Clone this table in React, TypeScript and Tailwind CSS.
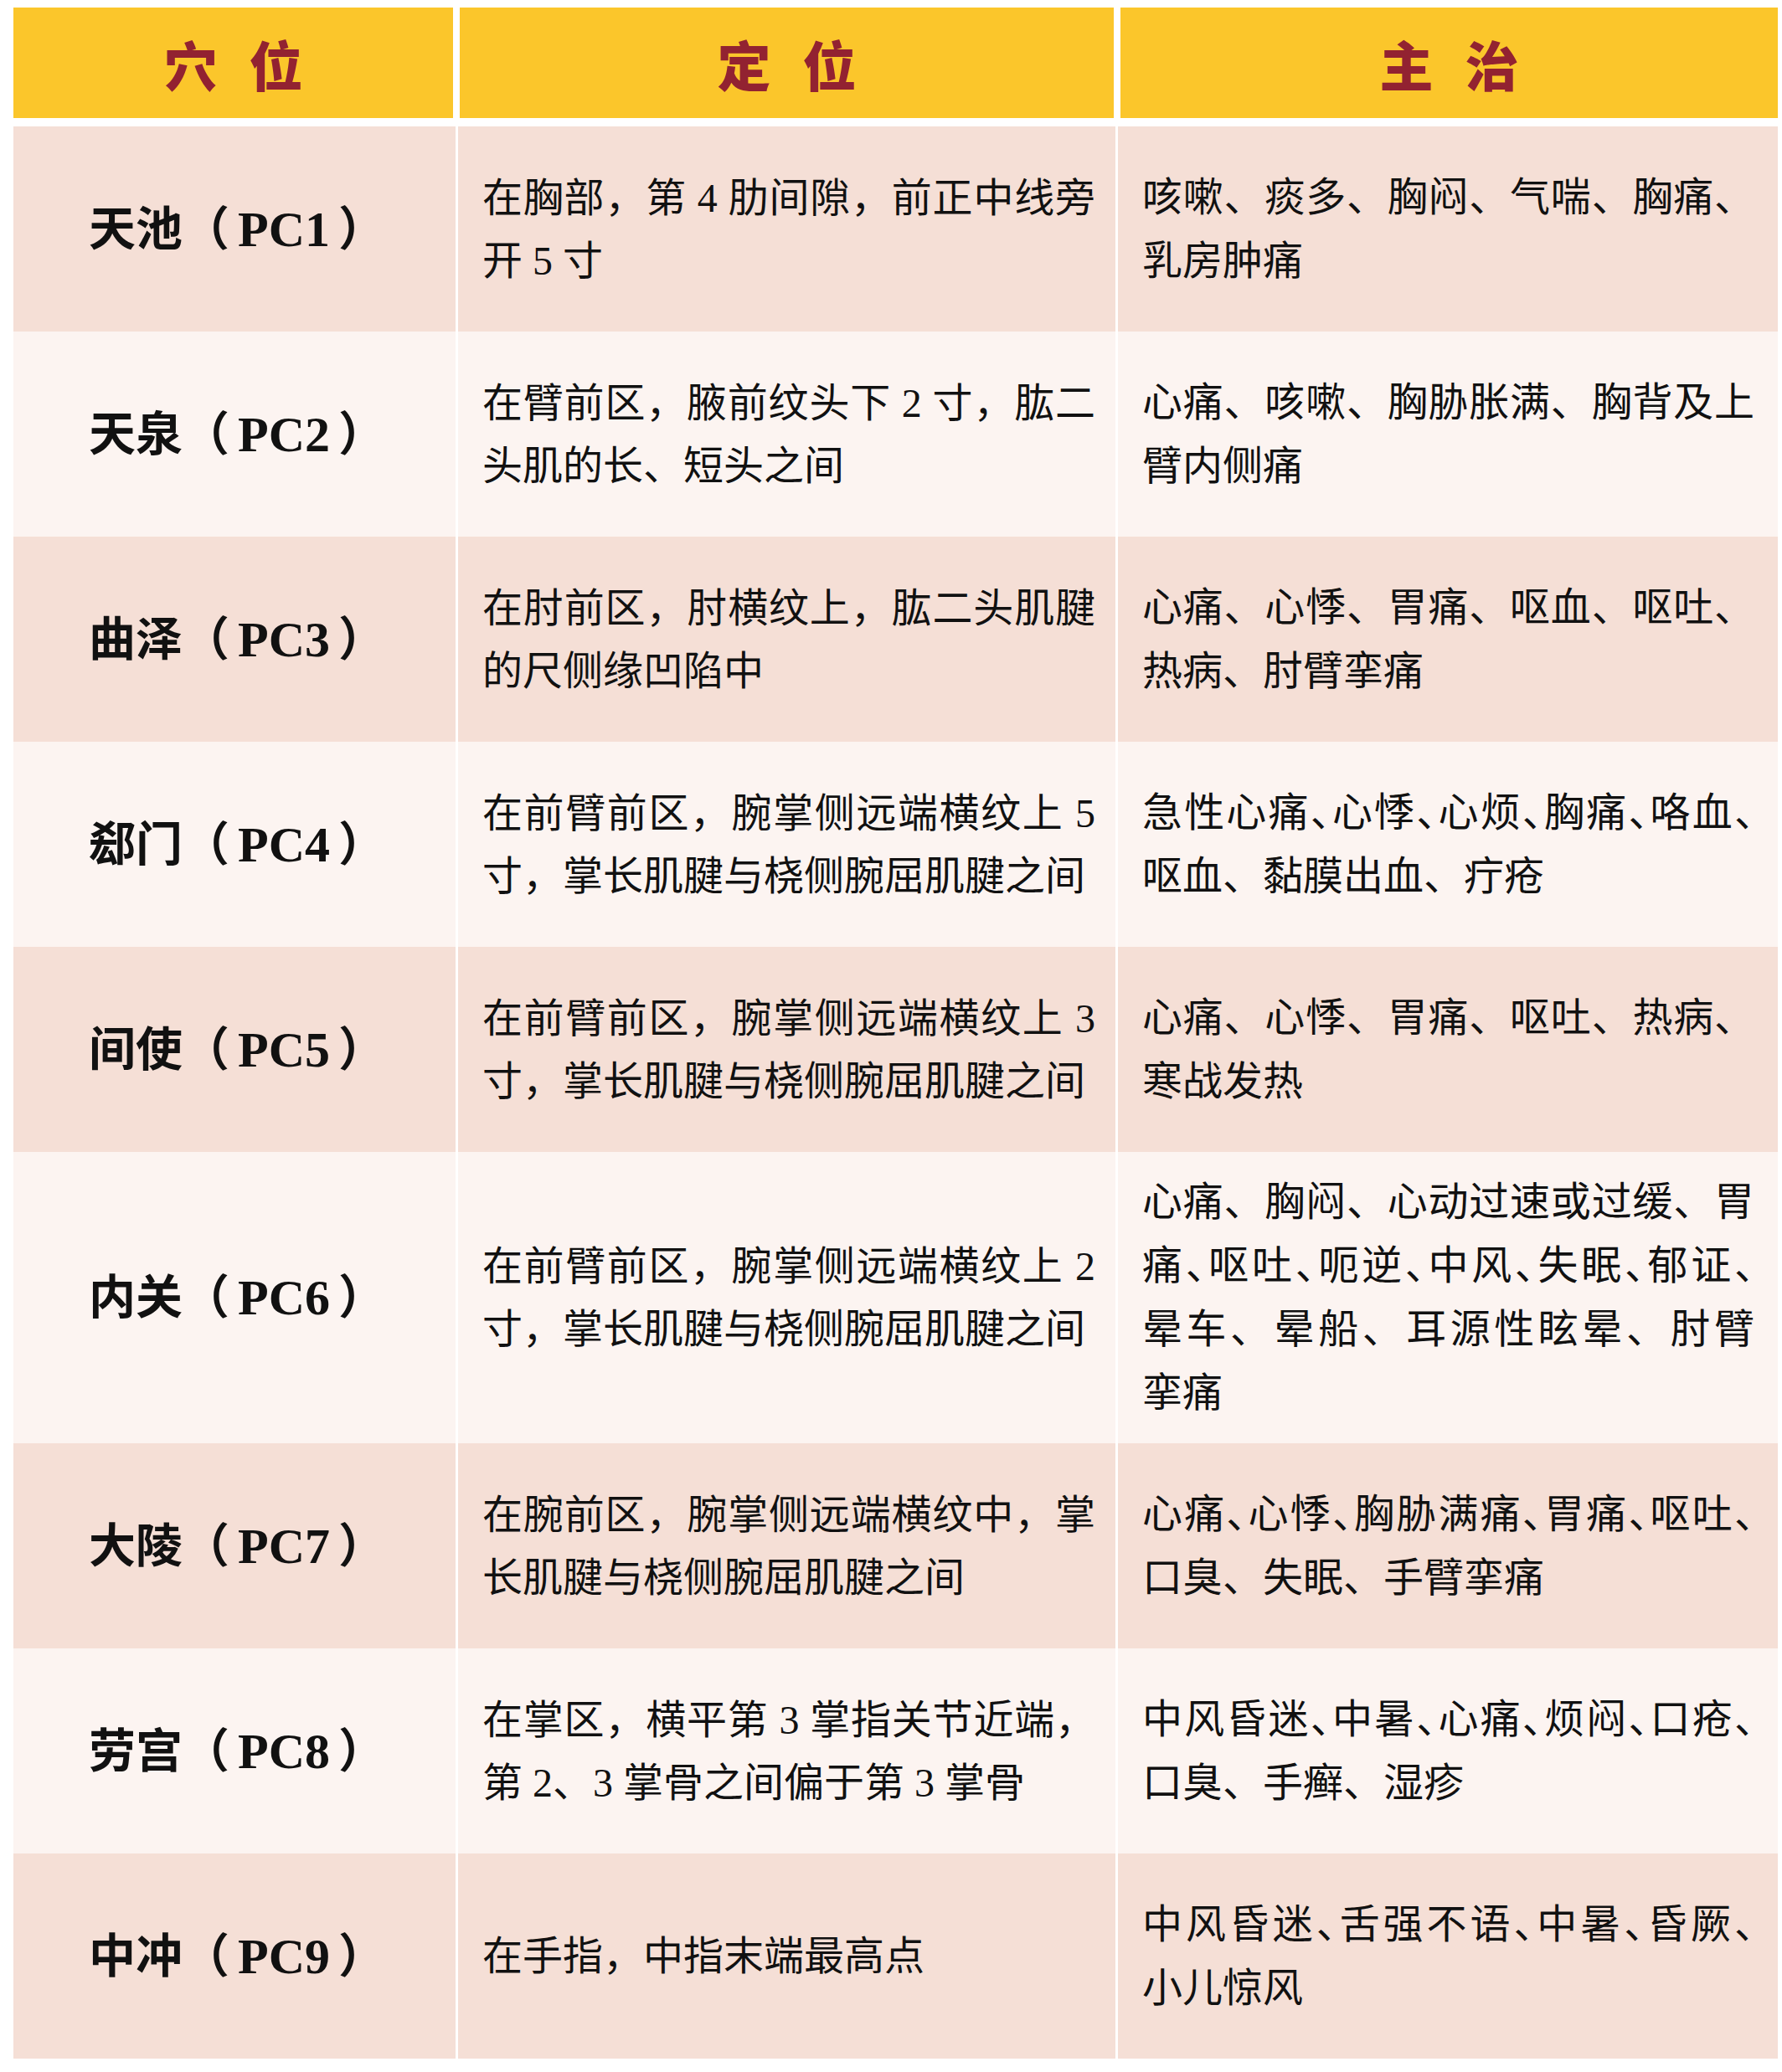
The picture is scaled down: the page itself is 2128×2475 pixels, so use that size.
type Row = {
  name: string;
  code: string;
  loc: string[];
  cure: string[];
};

const rows: Row[] = [
  {
    name: '天池',
    code: 'PC1',
    loc: ['在胸部，第 4 肋间隙，前正中线旁', '开 5 寸'],
    cure: ['咳嗽、痰多、胸闷、气喘、胸痛、', '乳房肿痛'],
  },
  {
    name: '天泉',
    code: 'PC2',
    loc: ['在臂前区，腋前纹头下 2 寸，肱二', '头肌的长、短头之间'],
    cure: ['心痛、咳嗽、胸胁胀满、胸背及上', '臂内侧痛'],
  },
  {
    name: '曲泽',
    code: 'PC3',
    loc: ['在肘前区，肘横纹上，肱二头肌腱', '的尺侧缘凹陷中'],
    cure: ['心痛、心悸、胃痛、呕血、呕吐、', '热病、肘臂挛痛'],
  },
  {
    name: '郄门',
    code: 'PC4',
    loc: ['在前臂前区，腕掌侧远端横纹上 5', '寸，掌长肌腱与桡侧腕屈肌腱之间'],
    cure: ['急性心痛、心悸、心烦、胸痛、咯血、', '呕血、黏膜出血、疔疮'],
  },
  {
    name: '间使',
    code: 'PC5',
    loc: ['在前臂前区，腕掌侧远端横纹上 3', '寸，掌长肌腱与桡侧腕屈肌腱之间'],
    cure: ['心痛、心悸、胃痛、呕吐、热病、', '寒战发热'],
  },
  {
    name: '内关',
    code: 'PC6',
    loc: ['在前臂前区，腕掌侧远端横纹上 2', '寸，掌长肌腱与桡侧腕屈肌腱之间'],
    cure: ['心痛、胸闷、心动过速或过缓、胃', '痛、呕吐、呃逆、中风、失眠、郁证、', '晕车、晕船、耳源性眩晕、肘臂', '挛痛'],
  },
  {
    name: '大陵',
    code: 'PC7',
    loc: ['在腕前区，腕掌侧远端横纹中，掌', '长肌腱与桡侧腕屈肌腱之间'],
    cure: ['心痛、心悸、胸胁满痛、胃痛、呕吐、', '口臭、失眠、手臂挛痛'],
  },
  {
    name: '劳宫',
    code: 'PC8',
    loc: ['在掌区，横平第 3 掌指关节近端，', '第 2、3 掌骨之间偏于第 3 掌骨'],
    cure: ['中风昏迷、中暑、心痛、烦闷、口疮、', '口臭、手癣、湿疹'],
  },
  {
    name: '中冲',
    code: 'PC9',
    loc: ['在手指，中指末端最高点'],
    cure: ['中风昏迷、舌强不语、中暑、昏厥、', '小儿惊风'],
  },
];

// rough width of a line at 48px: CJK full em, digits half, spaces quarter
function lineWidth(s: string) {
  let w = 0;
  for (const ch of s) {
    if (ch === ' ') w += 12;
    else if (/[0-9A-Za-z]/.test(ch)) w += 24;
    else w += 48;
  }
  return w;
}

function Lines({ lines, width }: { lines: string[]; width: number }) {
  return (
    <div className="w-full">
      {lines.map((l, i) => {
        const last = i === lines.length - 1;
        const squeeze = lineWidth(l) > width;
        return (
          <div
            key={i}
            className={
              (last ? 'text-left ' : 'text-justify [text-align-last:justify] ') +
              (squeeze ? "[font-feature-settings:'halt']" : '')
            }
          >
            {l}
          </div>
        );
      })}
    </div>
  );
}

export default function App() {
  const headers = [
    ['穴', '位'],
    ['定', '位'],
    ['主', '治'],
  ];

  return (
    <div className="w-[2128px] h-[2475px] bg-white pt-[9px] pl-[16px] font-['Liberation_Serif','Noto_Sans_CJK_SC',serif]">
      <div className="grid grid-cols-[525px_781px_785px] gap-x-[8px] h-[132px]">
        {headers.map((h, i) => (
          <div
            key={i}
            className="bg-[#fbc62b] flex items-center justify-center gap-[38px] text-[64px] leading-none font-black text-[#922231] font-['Noto_Sans_CJK_SC',sans-serif]"
          >
            <span>{h[0]}</span>
            <span>{h[1]}</span>
          </div>
        ))}
      </div>

      <div className="mt-[10px] grid grid-cols-[528px_785px_788px] gap-x-[3px] w-[2107px]">
        {rows.map((r, i) => {
          const bg = i % 2 === 0 ? 'bg-[#f5dfd6]' : 'bg-[#fcf4f1]';
          return (
            <div key={r.code} className="contents">
              <div className={`${bg} min-h-[245px] flex items-center pl-[90px] text-[#111]`}>
                <span className="text-[56px] font-semibold">{r.name}</span>
                <span className="text-[56px] font-semibold">（</span>
                <span className="text-[60px] font-bold px-[10px]">{r.code}</span>
                <span className="text-[56px] font-semibold">）</span>
              </div>
              <div className={`${bg} min-h-[245px] flex items-center pl-[29px] pr-[24px] py-[22px] text-[48px] leading-[75px] text-[#111]`}>
                <Lines lines={r.loc} width={732} />
              </div>
              <div className={`${bg} min-h-[245px] flex items-center pl-[29px] pr-[28px] py-[22px] text-[48px] leading-[76px] text-[#111]`}>
                <Lines lines={r.cure} width={731} />
              </div>
            </div>
          );
        })}
      </div>
    </div>
  );
}
